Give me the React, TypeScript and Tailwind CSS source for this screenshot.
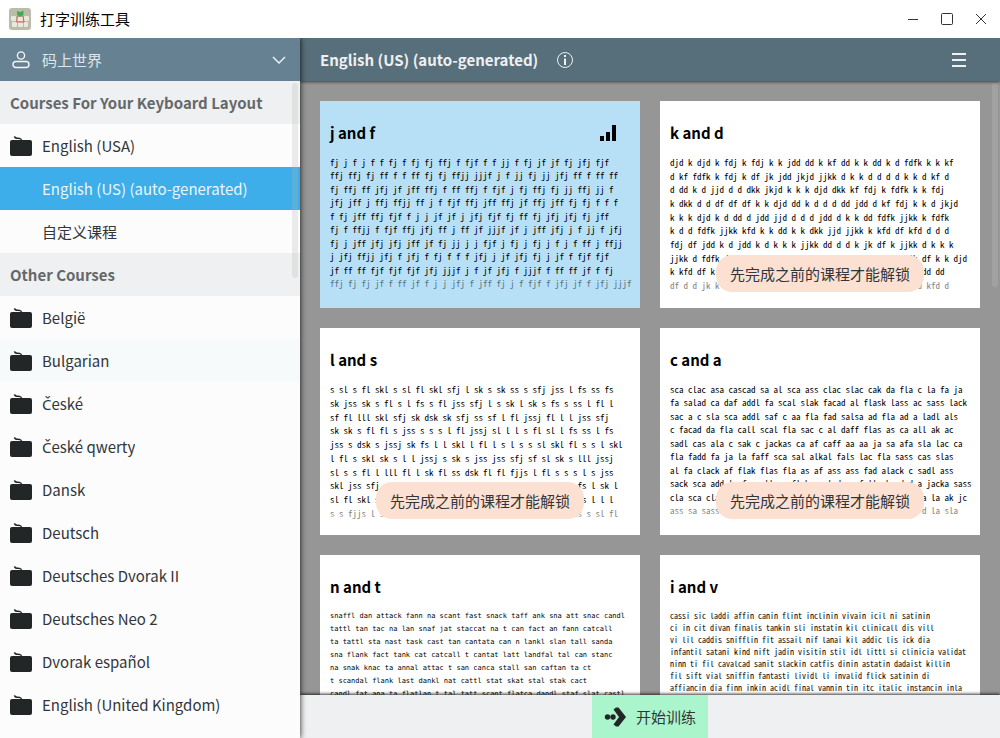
import clsx from "clsx"

type Course = {
  name: string
  initial?: string
  icon?: boolean
  selected?: boolean
  hovered?: boolean
}

type Lesson = {
  title: string
  lines: string[]
  text: string
  state?: "current" | "locked"
}

const layoutCourses: Course[] = [
  { name: "English (USA)", icon: true },
  { name: "English (US) (auto-generated)", selected: true },
  { name: "自定义课程" },
]

// initial is for letters that the main font has no glyph for
const otherCourses: Course[] = [
  { name: "België", icon: true },
  { name: "Bulgarian", icon: true, hovered: true },
  { initial: "Č", name: "eské", icon: true },
  { initial: "Č", name: "eské qwerty", icon: true },
  { name: "Dansk", icon: true },
  { name: "Deutsch", icon: true },
  { name: "Deutsches Dvorak II", icon: true },
  { name: "Deutsches Neo 2", icon: true },
  { name: "Dvorak español", icon: true },
  { name: "English (United Kingdom)", icon: true },
]

const lessons: Lesson[] = [
  {
    title: "j and f",
    state: "current",
    text: "h-[134px] text-[9px] leading-[13px] font-['Noto_Sans_Mono_CJK_SC','DejaVu_Sans_Mono',monospace]",
    lines: [
      "fj j f j f f fj f fj fj ffj f fjf f f jj f fj jf jf fj jfj fjf",
      "ffj ffj fj ff f f ff fj fj ffjj jjjf j f jj fj jj jfj ff f ff ff",
      "fj ffj ff jfj jf jff ffj f ff ffj f fjf j fj ffj fj jj ffj jj f",
      "jfj jff j ffj ffjj ff j f fjf ffj jff ffj jf ffj jff fj fj f f f",
      "f fj jff ffj fjf f j j jf jf j jfj fjf fj ff fj jfj jfj fj jff",
      "fj f ffjj f fjf ffj jfj ff j ff jf jjjf jf j jff jfj j f jj f jfj",
      "fj j jff jfj jfj jff jf fj jj j j fjf j fj j fj j f j f ff j ffjj",
      "j jfj ffjj jfj f jfj f fj f f f jfj j jf jfj fj j jf f fjf fjf",
      "jf ff ff fjf fjf fjf jfj jjjf j f jf jfj f jjjf f ff ff jf f fj",
      "ffj fj fj jf f ff jf f j j jfj f jff fj j f fjf f jfj jf f jfj jjjf",
    ],
  },
  {
    title: "k and d",
    state: "locked",
    text: "h-[136px] text-[9px] leading-[13px] font-['Noto_Sans_Mono_CJK_SC','DejaVu_Sans_Mono',monospace]",
    lines: [
      "djd k djd k fdj k fdj k k jdd dd k kf dd k k dd k d fdfk k k kf",
      "d kf fdfk k fdj k df jk jdd jkjd jjkk d k k d d d d k k d kf d",
      "d dd k d jjd d d dkk jkjd k k k djd dkk kf fdj k fdfk k k fdj",
      "k dkk d d df df df k k djd dd k d d d dd jdd d kf fdj k k d jkjd",
      "k k k djd k d dd d jdd jjd d d d jdd d k k dd fdfk jjkk k fdfk",
      "k d d fdfk jjkk kfd k k dd k k dkk jjd jjkk k kfd df kfd d d d",
      "fdj df jdd k d jdd k d k k k jjkk dd d d k jk df k jjkk d k k k",
      "jjkk d fdfk d jdd k kfd d k djd dd k d jjd k dkk d fdjk df k k djd",
      "k kfd df k d dd jkjd k d djd k fdj d k dd jjd k d k kfd dd dd",
      "df d d jk k fdj d kfd dd k jjkk d djd k k d fdfk d k jdd kfd d",
    ],
  },
  {
    title: "l and s",
    state: "locked",
    text: "h-[137px] text-[9px] leading-[13px] font-['Noto_Sans_Mono_CJK_SC','DejaVu_Sans_Mono',monospace]",
    lines: [
      "s sl s fl skl s sl fl skl sfj l sk s sk ss s sfj jss l fs ss fs",
      "sk jss sk s fl s l fs s fl jss sfj l s sk l sk s fs s ss l fl l",
      "sf fl lll skl sfj sk dsk sk sfj ss sf l fl jssj fl l l jss sfj",
      "sk sk s fl fl s jss s s s l fl jssj sl l l s fl sl l fs ss l fs",
      "jss s dsk s jssj sk fs l l skl l fl l s l s s sl skl fl s s l skl",
      "l fl s skl sk s l l jssj s sk s jss jss sfj sf sl sk s lll jssj",
      "sl s s fl l lll fl l sk fl ss dsk fl fl fjjs l fl s s s l s jss",
      "skl jss sfj s l fl sk s ss l jssj s fl l sk sl s dsk s fs l sk l",
      "sl fl skl s l jss fl s sk l ss sfj l s fl sk lll s l sl s l l l",
      "s s fjjs l sk fl s jss l s skl ss l fl sk s sfj l s l ss s sl fl",
    ],
  },
  {
    title: "c and a",
    state: "locked",
    text: "h-[134px] text-[9px] leading-[13px] font-['Noto_Sans_Mono_CJK_SC','DejaVu_Sans_Mono',monospace]",
    lines: [
      "sca clac asa cascad sa al sca ass clac slac cak da fla c la fa ja",
      "fa salad ca daf addl fa scal slak facad al flask lass ac sass lack",
      "sac a c sla sca addl saf c aa fla fad salsa ad fla ad a ladl als",
      "c facad da fla call scal fla sac c al daff flas as ca all ak ac",
      "sadl cas ala c sak c jackas ca af caff aa aa ja sa afa sla lac ca",
      "fla fadd fa ja la faff sca sal alkal fals lac fla sass cas slas",
      "al fa clack af flak flas fla as af ass ass fad alack c sadl ass",
      "sack sca add la fa call as flak sa lad ca fall ska dad a jacka sass",
      "cla sca clad fa la sad ask caff al da slac ca fad lass ca la ak jc",
      "ass sa sass la cak fa daf all ca slak ad fla sal ac cas d la sla",
    ],
  },
  {
    title: "n and t",
    text: "text-[7px] leading-[13px] font-['DejaVu_Sans_Mono',monospace]",
    lines: [
      "snaffl dan attack fann na scant fast snack taff ank sna att snac candl",
      "tattl tan tac na lan snaf jat staccat na t can fact an fann catcall",
      "ta tattl sta nast task cast tan cantata can n lankl slan tall sanda",
      "sna flank fact tank cat catcall t cantat latt landfal tal can stanc",
      "na snak knac ta annal attac t san canca stall san caftan ta ct",
      "t scandal flank last dankl nat cattl stat skat stal stak cact",
      "candl fat ana ta flatlan t tal tatt scant flatca dandl staf slat castl",
    ],
  },
  {
    title: "i and v",
    text: "text-[8px] leading-[12px] font-['Noto_Sans_Mono_CJK_SC','DejaVu_Sans_Mono',monospace]",
    lines: [
      "cassi sic laddi affin canin flint inclinin vivain icil ni satinin",
      "ci in cit divan finalis tankin sli instatin kil clinicall dis vill",
      "vi lil caddis snifflin fit assail nif lanai kil addic lis ick dia",
      "infantil satani kind nift jadin visitin stil idl littl si clinicia validat",
      "ninn ti fil cavalcad sanit slackin catfis dinin astatin dadaist killin",
      "fil sift vial sniffin fantasti lividl li invalid flick satinin di",
      "affiancin dia finn inkin acidl final vannin tin itc italic instancin inla",
    ],
  },
]

function AppIcon() {
  return (
    <svg width="22" height="22" viewBox="0 0 22 22" aria-hidden="true">
      <rect width="22" height="22" rx="3" fill="#bcbcaa" />
      <g fill="#e9e8dd">
        <rect x="2" y="8" width="5" height="5" rx="1" />
        <rect x="8" y="7" width="6" height="6" rx="1" />
        <rect x="15" y="8" width="5" height="5" rx="1" />
        <rect x="3" y="14" width="5" height="5" rx="1" />
        <rect x="9" y="14" width="5" height="5" rx="1" />
        <rect x="15" y="14" width="4" height="5" rx="1" />
      </g>
      <path d="M8.500 8h5.500l1 6H7.500z" fill="none" stroke="#d9605c" strokeWidth="1" />
      <path d="M8 3l3 1 3.500-1.500v4.500l-3.500 2-3-2z" fill="#3fae4c" />
    </svg>
  )
}

function KeyboardIcon() {
  return (
    <svg width="22" height="20" viewBox="0 0 22 20" aria-hidden="true">
      <path d="M4.500 .3c.3 1.800 1.300 1.900 3.200 1.900 2.800 0 3.800.3 3.800 2.800" fill="none" stroke="#232627" strokeWidth="1.600" />
      <rect y="4" width="22" height="16" rx="2" fill="#232627" />
    </svg>
  )
}

function CourseRow({ name, initial, icon, selected, hovered }: Course) {
  return (
    <li>
      <button
        className={clsx(
          "flex w-full h-[43px] items-center gap-2.5 px-2.5 text-left",
          selected && "bg-[#3daee9] text-[#eaf6fd]",
          hovered && "bg-[#f6fafb]"
        )}
      >
        <span className="w-[22px]">{icon && <KeyboardIcon />}</span>
        <span className="truncate">
          {initial && <span className="font-['Noto_Sans',sans-serif]">{initial}</span>}
          {name}
        </span>
      </button>
    </li>
  )
}

function SectionTitle({ children }: { children: string }) {
  return (
    <h2 className="flex h-[43px] items-center bg-[#eff0f1] px-2.5 font-bold text-[#65686a]">{children}</h2>
  )
}

function LessonCard({ title, lines, text, state }: Lesson) {
  return (
    <article className={clsx("relative h-[207px] overflow-hidden px-2.5 pt-5", state === "current" ? "bg-[#b7e0f7]" : "bg-white")}>
      <div className="flex h-6 items-center justify-between pr-3.5 text-black">
        <h3 className="font-bold">{title}</h3>
        {state === "current" && (
          <svg width="16" height="16" viewBox="0 0 16 16" aria-hidden="true">
            <path d="M0 11h4v5H0zM6 7h4v9H6zM12 0h4v16h-4z" />
          </svg>
        )}
      </div>
      <div className={clsx("mt-[11px] flex flex-col justify-between whitespace-pre text-black", text)}>
        {lines.map((line, i) => (
          <p key={line} className={clsx(i === 9 && "opacity-50")}>{line}</p>
        ))}
      </div>
      {state === "locked" && (
        <div className="absolute inset-x-0 bottom-4 flex justify-center">
          <span className="flex h-[37px] items-center rounded-2xl bg-[#fce1d2] px-3.5 text-[#31363b]">先完成之前的课程才能解锁</span>
        </div>
      )}
    </article>
  )
}

export default function App() {
  return (
    <div className="flex h-screen flex-col overflow-hidden bg-white font-['Noto_Sans_CJK_SC',sans-serif] text-[15px] leading-6 text-[#31363b]">
      {/* Window title bar */}
      <div className="relative z-30 flex h-[38px] shrink-0 items-center justify-between bg-white pl-[9px] pr-[13px] text-black">
        <div className="flex items-center gap-[9px]">
          <AppIcon />
          <h1>打字训练工具</h1>
        </div>
        <div className="flex items-center gap-[22px] text-[#333]">
          <button aria-label="Minimize">
            <svg width="12" height="12" viewBox="0 0 12 12" stroke="currentColor"><path d="M1 6.500h10" /></svg>
          </button>
          <button aria-label="Maximize">
            <svg width="12" height="12" viewBox="0 0 12 12" fill="none" stroke="currentColor"><rect x=".5" y=".5" width="11" height="11" rx="1" /></svg>
          </button>
          <button aria-label="Close">
            <svg width="12" height="12" viewBox="0 0 12 12" stroke="currentColor"><path d="M1 1l10 10M11 1L1 11" /></svg>
          </button>
        </div>
      </div>

      <div className="flex min-h-0 flex-1">
        {/* Course list */}
        <aside className="relative z-20 flex w-[300px] shrink-0 flex-col bg-[#fcfcfc] shadow-[0_0_6px_rgba(0,0,0,0.9)]">
          <button className="flex h-[43px] shrink-0 items-center gap-3 bg-[#668292] pl-3 pr-3.5 text-[#dfe6ea]">
            <svg width="18" height="18" viewBox="0 0 18 18" fill="none" stroke="#f3f6f7" strokeWidth="1.400" aria-hidden="true">
              <circle cx="9" cy="4.500" r="3.600" />
              <rect x="1" y="10.500" width="16" height="6" rx="3" />
            </svg>
            <span className="flex-1 text-left">码上世界</span>
            <svg width="14" height="8" viewBox="0 0 14 8" fill="none" stroke="#f3f6f7" strokeWidth="1.400" aria-hidden="true">
              <path d="M1 1l6 6 6-6" />
            </svg>
          </button>
          <nav className="relative min-h-0 flex-1 overflow-hidden">
            <SectionTitle>Courses For Your Keyboard Layout</SectionTitle>
            <ul>
              {layoutCourses.map((course) => (
                <CourseRow key={course.name} {...course} />
              ))}
            </ul>
            <SectionTitle>Other Courses</SectionTitle>
            <ul>
              {otherCourses.map((course) => (
                <CourseRow key={course.name} {...course} />
              ))}
            </ul>
            <div className="absolute right-0.5 top-0.5 h-[195px] w-1.5 rounded-full bg-[#b4b4b4]/25" />
          </nav>
        </aside>

        <main className="flex min-w-0 flex-1 flex-col bg-[#969696]">
          <header className="relative z-10 flex h-[43px] shrink-0 items-center bg-[#566f7a] px-5 text-[#eff0f1] shadow-[0_1px_3px_rgba(0,0,0,0.6)]">
            <h2 className="font-bold">English (US) (auto-generated)</h2>
            <button aria-label="Course details" className="ml-[19px]">
              <svg width="16" height="16" viewBox="0 0 16 16" fill="none" stroke="currentColor">
                <circle cx="8" cy="8" r="7.500" />
                <path d="M8 3v2M8 6.500V13" strokeWidth="2" />
              </svg>
            </button>
            <button aria-label="Menu" className="ml-auto mr-3.5">
              <svg width="14" height="14" viewBox="0 0 14 14" fill="currentColor">
                <path d="M0 0h14v2H0zM0 6h14v2H0zM0 12h14v2H0z" />
              </svg>
            </button>
          </header>

          <div className="relative min-h-0 flex-1 overflow-hidden p-5">
            <div className="grid grid-cols-2 gap-5">
              {lessons.map((lesson) => (
                <LessonCard key={lesson.title} {...lesson} />
              ))}
            </div>
            <div className="absolute right-0.5 top-0.5 h-[204px] w-1.5 rounded-full bg-white/10" />
          </div>

          <footer className="relative z-10 flex h-[43px] shrink-0 justify-center bg-[#eff0f1] shadow-[0_-1px_3px_rgba(0,0,0,0.8)]">
            <button className="flex items-center gap-2.5 bg-[#aaf5cb] px-3">
              <svg width="22" height="20" viewBox="0 0 22 20" fill="#232627" aria-hidden="true">
                <circle cx="3.500" cy="10" r="2.700" />
                <circle cx="9" cy="10" r="2.700" />
                <path d="M9.500 2.500L12 .5h2.500L22 10l-7.500 9.500H12l-2.500-2L15 10z" />
              </svg>
              开始训练
            </button>
          </footer>
        </main>
      </div>
    </div>
  )
}
